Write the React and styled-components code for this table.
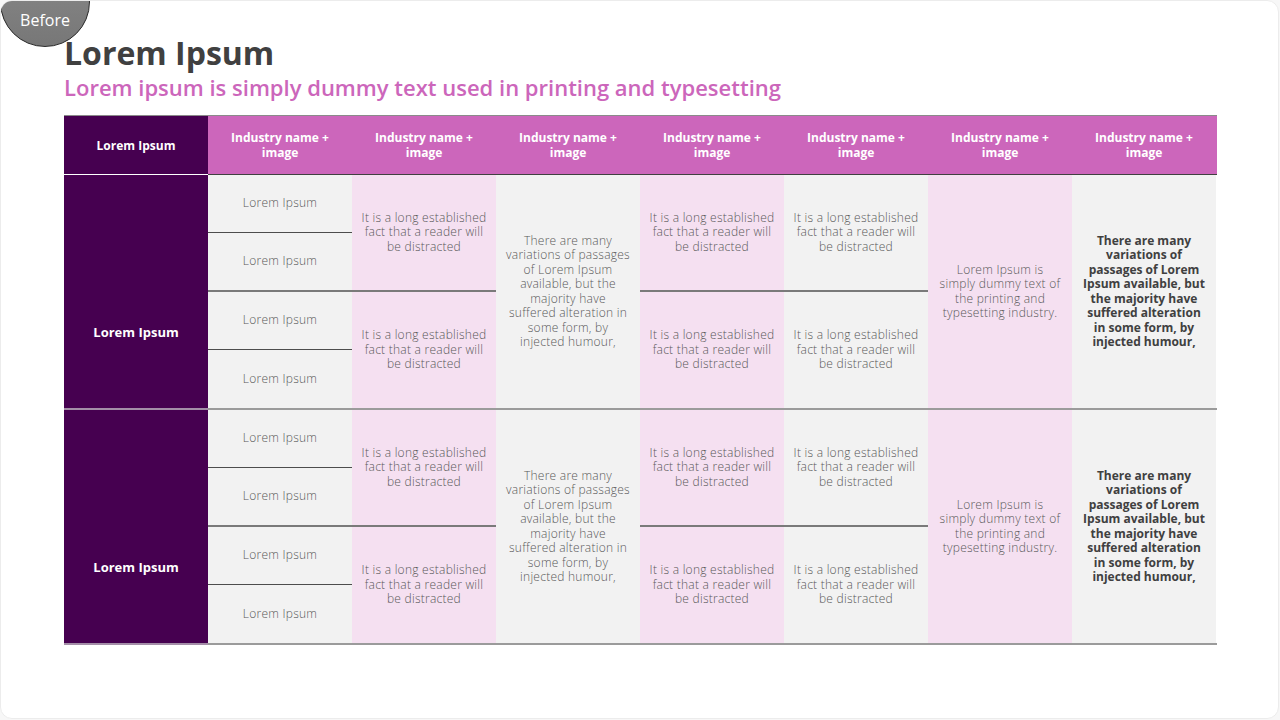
import React from 'react';
import styled, { createGlobalStyle, css } from 'styled-components';

const GlobalStyle = createGlobalStyle`
    html, body {
        margin: 0;
        padding: 0;
        background: #f7f7f7;
    }
    * {
        box-sizing: border-box;
    }
`;

const Page = styled.div`
    position: relative;
    width: 1279px;
    height: 719px;
    background: #ffffff;
    border: 1px solid #ececec;
    border-radius: 12px;
    overflow: hidden;
    padding: 32px 0 0 63px;
    font-family: "Open Sans", "Liberation Sans", sans-serif;
`;

const Badge = styled.div`
    position: absolute;
    left: -1px;
    top: -44px;
    width: 90px;
    height: 90px;
    border-radius: 50%;
    background: linear-gradient(#8a8a8a, #777777);
    border: 1px solid #2a2a2a;
    display: flex;
    align-items: flex-end;
    justify-content: center;
    padding-bottom: 15px;
    color: #ffffff;
    font-size: 16px;
`;

const Title = styled.h1`
    margin: 0;
    font-size: 32px;
    font-weight: 700;
    line-height: 40px;
    color: #404040;
`;

const Subtitle = styled.h2`
    margin: 0;
    font-size: 22px;
    font-weight: 600;
    line-height: 28px;
    color: #cc66bb;
`;

const Table = styled.div`
    margin-top: 14px;
    width: 1153px;
`;

const HeaderRow = styled.div`
    display: grid;
    grid-template-columns: repeat(8, 144px);
    height: 60px;
    border-top: 1px solid #8a8a8a;
    background: #cc66bb;
    border-bottom: 1px solid #404040;
`;

const HeadCell = styled.div`
    display: flex;
    align-items: center;
    justify-content: center;
    text-align: center;
    padding: 0 16px;
    font-size: 12px;
    font-weight: 700;
    line-height: 15px;
    color: #ffffff;
    ${p => p.$dark && css`
        background: #460050;
        margin-bottom: -1px;
        border-bottom: 1px solid #ffffff;
    `}
`;

const Group = styled.div`
    display: grid;
    grid-template-columns: repeat(8, 144px);
    grid-template-rows: repeat(4, 58.25px);
    border-bottom: 2px solid #9b9b9b;
`;

const GroupLabel = styled.div`
    grid-column: 1;
    grid-row: 1 / 5;
    margin-bottom: -2px;
    padding-top: 80px;
    background: #460050;
    border-bottom: 2px solid #a48ea8;
    display: flex;
    align-items: center;
    justify-content: center;
    font-size: 13px;
    font-weight: 700;
    color: #ffffff;
`;

const lines = {
    none: 'none',
    thin: '1px solid #4d4d4d',
    thick: '2px solid #7a7a7a',
};

const Cell = styled.div`
    grid-column: ${p => p.$col};
    grid-row: ${p => p.$row};
    background: ${p => (p.$pink ? '#f5e0f1' : '#f2f2f2')};
    border-bottom: ${p => lines[p.$line || 'none']};
    display: flex;
    align-items: center;
    justify-content: center;
    text-align: center;
    white-space: pre-line;
    padding: 0 2px;
    font-size: 12px;
    font-weight: ${p => (p.$bold ? 700 : 300)};
    line-height: 14.5px;
    letter-spacing: ${p => (p.$bold ? '0' : '0.25px')};
    color: ${p => (p.$bold ? '#404040' : '#595959')};
`;

const LONG = 'It is a long established\nfact that a reader will\nbe distracted';
const MANY = 'There are many\nvariations of passages\nof Lorem Ipsum\navailable, but the\nmajority have\nsuffered alteration in\nsome form, by\ninjected humour,';
const MANY_BOLD = 'There are many\nvariations of\npassages of Lorem\nIpsum available, but\nthe majority have\nsuffered alteration\nin some form, by\ninjected humour,';
const DUMMY = 'Lorem Ipsum is\nsimply dummy text of\nthe printing and\ntypesetting industry.';

function RowGroup() {
    return (
        <Group>
            <GroupLabel>Lorem Ipsum</GroupLabel>
            <Cell $col={2} $row={1} $line="thin">Lorem Ipsum</Cell>
            <Cell $col={2} $row={2} $line="thick">Lorem Ipsum</Cell>
            <Cell $col={2} $row={3} $line="thin">Lorem Ipsum</Cell>
            <Cell $col={2} $row={4}>Lorem Ipsum</Cell>
            <Cell $col={3} $row="1 / 3" $pink $line="thick">{LONG}</Cell>
            <Cell $col={3} $row="3 / 5" $pink>{LONG}</Cell>
            <Cell $col={4} $row="1 / 5">{MANY}</Cell>
            <Cell $col={5} $row="1 / 3" $pink $line="thick">{LONG}</Cell>
            <Cell $col={5} $row="3 / 5" $pink>{LONG}</Cell>
            <Cell $col={6} $row="1 / 3" $line="thick">{LONG}</Cell>
            <Cell $col={6} $row="3 / 5">{LONG}</Cell>
            <Cell $col={7} $row="1 / 5" $pink>{DUMMY}</Cell>
            <Cell $col={8} $row="1 / 5" $bold>{MANY_BOLD}</Cell>
        </Group>
    );
}

export default function App() {
    return (
        <Page>
            <GlobalStyle />
            <Badge>Before</Badge>
            <Title>Lorem Ipsum</Title>
            <Subtitle>Lorem ipsum is simply dummy text used in printing and typesetting</Subtitle>
            <Table>
                <HeaderRow>
                    <HeadCell $dark>Lorem Ipsum</HeadCell>
                    {Array.from({ length: 7 }).map((_, i) => (
                        <HeadCell key={i}>Industry name + image</HeadCell>
                    ))}
                </HeaderRow>
                <RowGroup />
                <RowGroup />
            </Table>
        </Page>
    );
}
